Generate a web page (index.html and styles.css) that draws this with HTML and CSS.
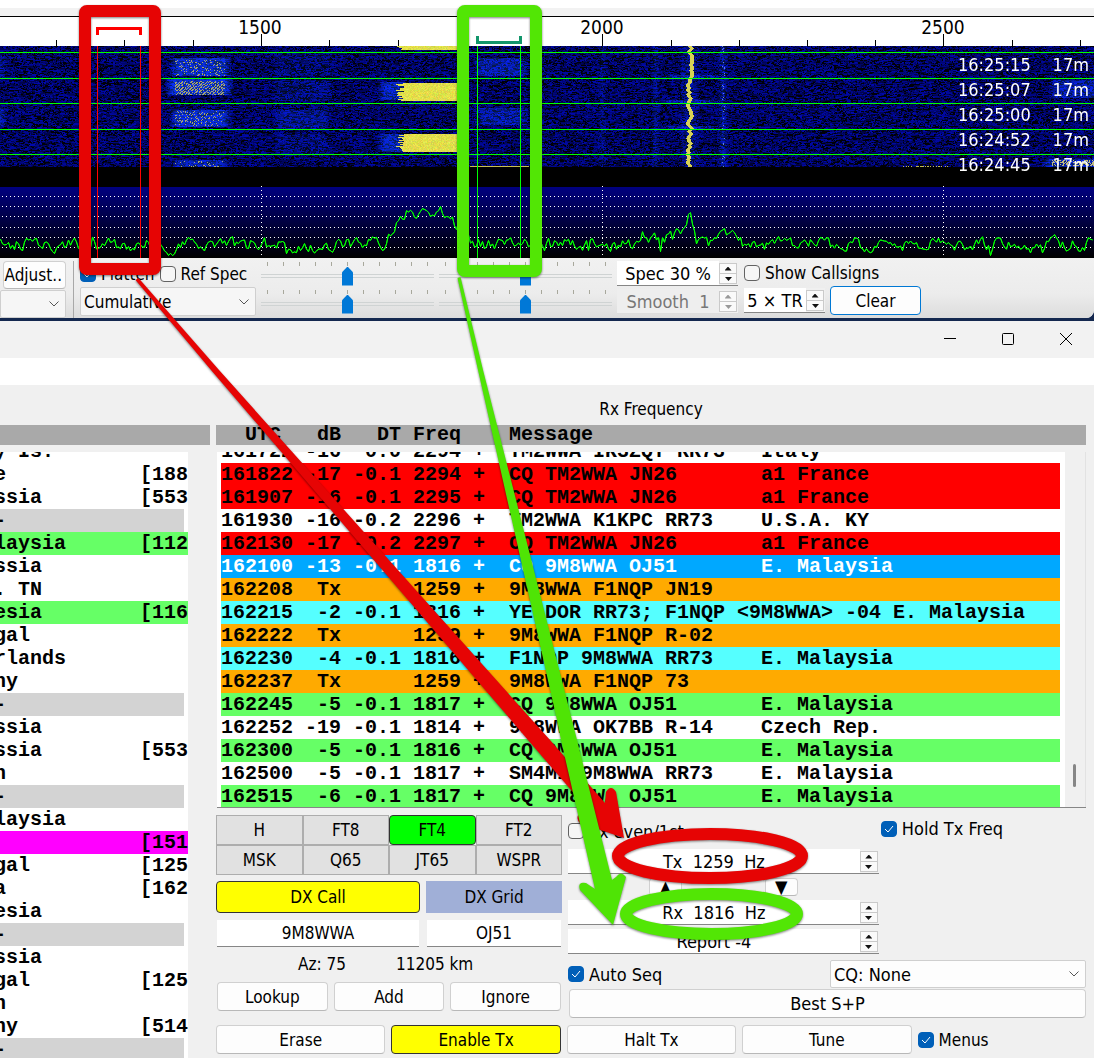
FILE: index.html
```html
<!DOCTYPE html>
<html lang="en">
<head>
<meta charset="utf-8">
<title>Wide Graph and Rx Frequency</title>
<link rel="stylesheet" href="styles.css">
</head>
<body>
<section class="graph-window">
  <div class="strip"></div>
  <div class="ruler">
    <svg class="ruler-marks" width="1094" height="29" aria-hidden="true">
      <path class="tick" d="M56.500 23v6M124.500 23v6M193.500 23v6M329.500 23v6M398.500 23v6M466.500 23v6M534.500 23v6M671.500 23v6M739.500 23v6M807.500 23v6M875.500 23v6M1012.500 23v6M1080.500 23v6M261.500 17v12M602.500 17v12M943.500 17v12"/>
      <path class="mark-tx" d="M97.500 18v-6.500h43v6.500"/>
      <path class="mark-rx" d="M477.500 19v6.500h43v-6.500"/>
      <text x="260" y="17">1500</text>
      <text x="602" y="17">2000</text>
      <text x="943" y="17">2500</text>
    </svg>
  </div>
  <div class="plot">
    <canvas id="waterfall" height="212"></canvas>
    <div class="stamps">
      <p><span>16:25:15</span><span>17m</span></p>
      <p><span>16:25:07</span><span>17m</span></p>
      <p><span>16:25:00</span><span>17m</span></p>
      <p><span>16:24:52</span><span>17m</span></p>
      <p><span>16:24:45</span><span>17m</span></p>
    </div>
  </div>
  <div class="controls">
    <div class="palette">
      <button class="btn adjust" type="button">Adjust..</button>
      <select class="combo" aria-label="Palette"><option></option></select>
    </div>
    <div class="spec-mode">
      <div class="checks">
        <label class="check"><input type="checkbox" checked>Flatten</label>
        <label class="check"><input type="checkbox">Ref Spec</label>
      </div>
      <select class="combo" aria-label="Spectrum type"><option>Cumulative</option></select>
    </div>
    <div class="sliders">
      <input type="range" value="50" aria-label="Waterfall gain">
      <input type="range" value="50" aria-label="Spectrum gain">
      <input type="range" value="50" aria-label="Waterfall zero">
      <input type="range" value="50" aria-label="Spectrum zero">
    </div>
    <div class="spins">
      <div class="spin"><input type="text" value="Spec 30 %" aria-label="Spectrum height"><span class="steps"><button type="button" aria-label="Up"></button><button type="button" aria-label="Down"></button></span></div>
      <div class="spin off"><input type="text" value="Smooth  1" aria-label="Smoothing" disabled><span class="steps"><button type="button" aria-label="Up" disabled></button><button type="button" aria-label="Down" disabled></button></span></div>
    </div>
    <div class="calls">
      <label class="check"><input type="checkbox">Show Callsigns</label>
      <div class="tr-row">
        <div class="spin tr"><input type="text" value="5 × TR" aria-label="Periods"><span class="steps"><button type="button" aria-label="Up"></button><button type="button" aria-label="Down"></button></span></div>
        <button class="btn clear" type="button">Clear</button>
      </div>
    </div>
  </div>
</section>

<section class="main-window">
  <header class="titlebar">
    <button type="button" aria-label="Minimize"><svg width="14" height="14"><path d="M1 6.500h12"/></svg></button>
    <button type="button" aria-label="Maximize"><svg width="14" height="14"><rect x="1.500" y="1.500" width="11" height="11" rx="1"/></svg></button>
    <button type="button" aria-label="Close"><svg width="14" height="14"><path d="M1 1l12 12M13 1L1 13"/></svg></button>
  </header>
  <div class="menubar"></div>
  <main class="panes">
    <section class="band">
      <h2 class="pane-title"></h2>
      <div class="cols-head"></div>
      <div class="log">
        <table>
          <tbody>
            <tr><td>y Is.</td><td></td></tr>
            <tr><td>e</td><td>[188</td></tr>
            <tr><td>ssia</td><td>[5532</td></tr>
            <tr class="sep"><td>-</td><td></td></tr>
            <tr class="cq"><td>laysia</td><td>[1126</td></tr>
            <tr><td>ssia</td><td></td></tr>
            <tr><td>. TN</td><td></td></tr>
            <tr class="cq"><td>esia</td><td>[1160</td></tr>
            <tr><td>gal</td><td></td></tr>
            <tr><td>rlands</td><td></td></tr>
            <tr><td>ny</td><td></td></tr>
            <tr class="sep"><td>-</td><td></td></tr>
            <tr><td>ssia</td><td></td></tr>
            <tr><td>ssia</td><td>[5532</td></tr>
            <tr><td>n</td><td></td></tr>
            <tr class="sep"><td>-</td><td></td></tr>
            <tr><td>laysia</td><td></td></tr>
            <tr class="new"><td></td><td>[1512</td></tr>
            <tr><td>gal</td><td>[1258</td></tr>
            <tr><td>a</td><td>[1622</td></tr>
            <tr><td>esia</td><td></td></tr>
            <tr class="sep"><td>-</td><td></td></tr>
            <tr><td>ssia</td><td></td></tr>
            <tr><td>gal</td><td>[1258</td></tr>
            <tr><td>n</td><td></td></tr>
            <tr><td>ny</td><td>[514</td></tr>
            <tr class="sep"><td>-</td><td></td></tr>
          </tbody>
        </table>
      </div>
    </section>

    <section class="rx">
      <h2 class="pane-title">Rx Frequency</h2>
      <div class="cols-head"><span class="utc">UTC</span><span class="db">dB</span><span class="dt">DT</span><span class="freq">Freq</span><span class="msg">Message</span></div>
      <div class="log">
        <table>
          <tbody>
            <tr><td class="utc">161722</td><td class="db">-16</td><td class="dt">0.0</td><td class="freq">2294</td><td class="plus">+</td><td class="msg">TM2WWA IK3ZQT RR73</td><td>Italy</td></tr>
            <tr class="dx"><td class="utc">161822</td><td class="db">-17</td><td class="dt">-0.1</td><td class="freq">2294</td><td class="plus">+</td><td class="msg">CQ TM2WWA JN26</td><td>a1 France</td></tr>
            <tr class="dx"><td class="utc">161907</td><td class="db">-16</td><td class="dt">-0.1</td><td class="freq">2295</td><td class="plus">+</td><td class="msg">CQ TM2WWA JN26</td><td>a1 France</td></tr>
            <tr><td class="utc">161930</td><td class="db">-16</td><td class="dt">-0.2</td><td class="freq">2296</td><td class="plus">+</td><td class="msg">TM2WWA K1KPC RR73</td><td>U.S.A. KY</td></tr>
            <tr class="dx"><td class="utc">162130</td><td class="db">-17</td><td class="dt">-0.2</td><td class="freq">2297</td><td class="plus">+</td><td class="msg">CQ TM2WWA JN26</td><td>a1 France</td></tr>
            <tr class="sel"><td class="utc">162100</td><td class="db">-13</td><td class="dt">-0.1</td><td class="freq">1816</td><td class="plus">+</td><td class="msg">CQ 9M8WWA OJ51</td><td>E. Malaysia</td></tr>
            <tr class="tx"><td class="utc">162208</td><td class="db">Tx</td><td class="dt"></td><td class="freq">1259</td><td class="plus">+</td><td class="msg">9M8WWA F1NQP JN19</td><td></td></tr>
            <tr class="me"><td class="utc">162215</td><td class="db">-2</td><td class="dt">-0.1</td><td class="freq">1816</td><td class="plus">+</td><td class="msg" colspan="2">YE1DOR RR73; F1NQP &lt;9M8WWA&gt; -04 E. Malaysia</td></tr>
            <tr class="tx"><td class="utc">162222</td><td class="db">Tx</td><td class="dt"></td><td class="freq">1259</td><td class="plus">+</td><td class="msg">9M8WWA F1NQP R-02</td><td></td></tr>
            <tr class="me"><td class="utc">162230</td><td class="db">-4</td><td class="dt">-0.1</td><td class="freq">1816</td><td class="plus">+</td><td class="msg">F1NQP 9M8WWA RR73</td><td>E. Malaysia</td></tr>
            <tr class="tx"><td class="utc">162237</td><td class="db">Tx</td><td class="dt"></td><td class="freq">1259</td><td class="plus">+</td><td class="msg">9M8WWA F1NQP 73</td><td></td></tr>
            <tr class="cq"><td class="utc">162245</td><td class="db">-5</td><td class="dt">-0.1</td><td class="freq">1817</td><td class="plus">+</td><td class="msg">CQ 9M8WWA OJ51</td><td>E. Malaysia</td></tr>
            <tr><td class="utc">162252</td><td class="db">-19</td><td class="dt">-0.1</td><td class="freq">1814</td><td class="plus">+</td><td class="msg">9M8WWA OK7BB R-14</td><td>Czech Rep.</td></tr>
            <tr class="cq"><td class="utc">162300</td><td class="db">-5</td><td class="dt">-0.1</td><td class="freq">1816</td><td class="plus">+</td><td class="msg">CQ 9M8WWA OJ51</td><td>E. Malaysia</td></tr>
            <tr><td class="utc">162500</td><td class="db">-5</td><td class="dt">-0.1</td><td class="freq">1817</td><td class="plus">+</td><td class="msg">SM4MI 9M8WWA RR73</td><td>E. Malaysia</td></tr>
            <tr class="cq"><td class="utc">162515</td><td class="db">-6</td><td class="dt">-0.1</td><td class="freq">1817</td><td class="plus">+</td><td class="msg">CQ 9M8WWA OJ51</td><td>E. Malaysia</td></tr>
          </tbody>
        </table>
        <div class="scroll"><span class="thumb"></span></div>
      </div>

      <div class="settings">
        <div class="station">
          <div class="modes">
            <button type="button">H</button><button type="button">FT8</button><button type="button" class="on">FT4</button><button type="button">FT2</button>
            <button type="button">MSK</button><button type="button">Q65</button><button type="button">JT65</button><button type="button">WSPR</button>
          </div>
          <div class="dx-grid">
            <button class="dx-call" type="button">DX Call</button>
            <button class="dx-loc" type="button">DX Grid</button>
            <input class="field" type="text" value="9M8WWA" aria-label="DX Call">
            <input class="field" type="text" value="OJ51" aria-label="DX Grid">
          </div>
          <p class="bearing"><span>Az: 75</span><span>11205 km</span></p>
          <div class="trio">
            <button class="btn" type="button">Lookup</button>
            <button class="btn" type="button">Add</button>
            <button class="btn" type="button">Ignore</button>
          </div>
        </div>
        <div class="tuning">
          <div class="hold-row">
            <label class="check"><input type="checkbox">Tx even/1st</label>
            <label class="check hold"><input type="checkbox" checked>Hold Tx Freq</label>
          </div>
          <div class="freqs">
            <div class="spin"><input type="text" value="Tx  1259  Hz" aria-label="Tx frequency"><span class="steps"><button type="button" aria-label="Up"></button><button type="button" aria-label="Down"></button></span></div>
            <div class="copy"><button class="btn" type="button" aria-label="Set Tx to Rx">▲</button><button class="btn" type="button" aria-label="Set Rx to Tx">▼</button></div>
            <div class="spin"><input type="text" value="Rx  1816  Hz" aria-label="Rx frequency"><span class="steps"><button type="button" aria-label="Up"></button><button type="button" aria-label="Down"></button></span></div>
            <div class="spin"><input type="text" value="Report -4" aria-label="Report"><span class="steps"><button type="button" aria-label="Up"></button><button type="button" aria-label="Down"></button></span></div>
          </div>
          <div class="seq-row">
            <label class="check"><input type="checkbox" checked>Auto Seq</label>
            <select class="combo" aria-label="CQ filter"><option>CQ: None</option></select>
          </div>
          <button class="btn best" type="button">Best S+P</button>
        </div>
      </div>
      <div class="actions">
        <button class="btn" type="button">Erase</button>
        <button class="btn enable" type="button">Enable Tx</button>
        <button class="btn" type="button">Halt Tx</button>
        <button class="btn" type="button">Tune</button>
        <label class="check"><input type="checkbox" checked>Menus</label>
      </div>
    </section>
  </main>
</section>

<svg class="notes" width="1094" height="1058" viewBox="0 0 1094 1058" aria-hidden="true">
  <g class="red">
    <rect x="85" y="11" width="70" height="258" rx="2"/>
    <ellipse cx="710" cy="856" rx="92" ry="22"/>
    <path class="head" d="M135.500 280L138.500 278L219 370L532 720L550 740L605 803L606 792Q611 784 616 792L624 838L580 823Q575 818 580 813L590 812L528 740L511 720L211 370Z"/>
  </g>
  <g class="green">
    <rect x="463" y="11" width="73" height="260" rx="2"/>
    <ellipse cx="711.500" cy="914" rx="85.500" ry="20"/>
    <path class="head" d="M457.500 278L460.500 277L483 370L572 720L577 740L612 880L616 877Q621 870 626 877L613 925L580 890Q577 881 586 883L595 889L561 740L557 720L478 370Z"/>
  </g>
</svg>
<script src="waterfall.js"></script>
</body>
</html>
```
FILE: styles.css
```css
* { box-sizing: border-box; }

body {
  margin: 0;
  height: 100vh;
  display: flex;
  flex-direction: column;
  overflow: hidden;
  position: relative;
  background: #14284f;
  color: #000;
  font-family: "DejaVu Sans Condensed", "DejaVu Sans", "Noto Sans", sans-serif;
  font-size: 17px;
}

button, input, select { font: inherit; color: inherit; margin: 0; }
h2, p { margin: 0; font-weight: normal; }

/* Wide graph */
.graph-window { background: #fff; padding-top: 8px; border-bottom-right-radius: 8px; overflow: hidden; flex: none; }
.strip { height: 9px; background: #f2f2f2; border-bottom: 1px solid #000; }
.ruler { height: 29px; overflow: hidden; }
.ruler-marks { display: block; font-size: 19px; text-anchor: middle; }
.tick { stroke: #000; }
.mark-tx, .mark-rx { fill: none; stroke-width: 3; }
.mark-tx { stroke: #f00; }
.mark-rx { stroke: #12966b; }

.plot { position: relative; background: #000; height: 212px; overflow: hidden; }
.plot canvas { display: block; width: 100%; height: 212px; }
.stamps { position: absolute; top: 6px; right: 5px; color: #fff; font-size: 18px; }
.stamps p { display: flex; justify-content: space-between; width: 131px; line-height: 25px; }

.controls {
  display: flex;
  height: 60px;
  padding-top: 3px;
  background: linear-gradient(#f1f1f1, #ececec 60%, #dcdcdc);
}

.btn {
  background: #fdfdfd;
  border: 1px solid #d0d0d0;
  border-bottom-color: #b8b8b8;
  border-radius: 4px;
  padding: 0;
  height: 29px;
  white-space: nowrap;
}

.combo {
  appearance: none;
  height: 28px;
  width: 100%;
  padding: 0 24px 0 3px;
  border: 1px solid #cfcfcf;
  border-radius: 2px;
  background: #fdfdfd url("data:image/svg+xml,%3Csvg xmlns='http://www.w3.org/2000/svg' width='10' height='6'%3E%3Cpath d='M.5.5L5 5L9.500.5' fill='none' stroke='%23555'/%3E%3C/svg%3E") no-repeat right 6px center;
}

.controls .combo { background-color: #f6f6f6; }

.check { display: inline-flex; align-items: center; gap: 5px; white-space: nowrap; }
.check input {
  appearance: none;
  flex: none;
  width: 16px;
  height: 16px;
  border: 1px solid #626262;
  border-radius: 4px;
  background: #f6f6f6;
}
.check input:checked {
  border-color: #005fb8;
  background: #005fb8 url("data:image/svg+xml,%3Csvg xmlns='http://www.w3.org/2000/svg' width='10' height='8'%3E%3Cpath d='M1 4L4 7L9 1' fill='none' stroke='%23fff'/%3E%3C/svg%3E") no-repeat center;
}

.palette { width: 74px; padding-right: 7px; border-right: 1px solid #a8a8a8; display: flex; flex-direction: column; gap: 1px; }
.adjust { margin-left: 3px; height: 28px; padding-right: 3px; text-align: right; overflow: hidden; }
.spec-mode { width: 182px; padding-left: 6px; display: flex; flex-direction: column; gap: 1px; }
.checks { display: flex; gap: 5px; height: 25px; }
.spec-mode .combo { height: 29px; }

.sliders { display: grid; grid-template-columns: 173px 173px; gap: 2px 5px; margin-left: 5px; align-content: start; }
.sliders input {
  appearance: none;
  width: 173px;
  height: 26px;
  padding: 4px 0 0;
  background:
    linear-gradient(#cfd3d3, #cfd3d3) 0 13px / 173px 1px no-repeat,
    linear-gradient(#cfd3d3, #cfd3d3) 0 16px / 173px 1px no-repeat,
    repeating-linear-gradient(90deg, #a8a89c 0 1px, transparent 1px 16px) 6px 1px / 161px 4px no-repeat;
}
.sliders input::-webkit-slider-thumb {
  appearance: none;
  width: 11px;
  height: 19px;
  background: #0078d7;
  clip-path: polygon(50% 0, 100% 30%, 100% 100%, 0 100%, 0 30%);
}

.spin {
  display: flex;
  height: 25px;
  background: #fff;
  border-bottom: 1px solid #868686;
  font-size: 18px;
}
.spin input {
  flex: 1;
  min-width: 0;
  padding: 0;
  border: 0;
  background: none;
  text-align: center;
}
.steps { display: flex; flex-direction: column; width: 19px; padding: 2px 1px 1px 0; background: #f0f0f0; }
.steps button {
  flex: 1;
  padding: 0;
  border: 1px solid #cacaca;
  background: #fafafa;
  display: flex;
  align-items: center;
  justify-content: center;
}
.steps button + button { border-top: 0; }
.steps button::before { content: ""; width: 7px; height: 4px; background: #111; clip-path: polygon(50% 0, 100% 100%, 0 100%); }
.steps button + button::before { transform: rotate(180deg); }

.spins { width: 121px; margin-left: 5px; display: flex; flex-direction: column; gap: 3px; }
.off { background: #eee; border-color: #ddd; color: #777; }
.off .steps button::before { background: #999; }
.calls { margin-left: 6px; }
.calls .check { height: 24px; }
.tr-row { display: flex; gap: 5px; margin-top: 1px; }
.tr { width: 81px; margin-top: 2px; }
.clear { width: 91px; border: 1px solid #0078d4; }

/* Main window */
.main-window { margin-top: 3px; flex: 1; min-height: 0; display: flex; flex-direction: column; background: #f0f0f0; }
.titlebar { flex: none; height: 37px; padding: 0 3px 2px 0; display: flex; justify-content: flex-end; gap: 8px; background: #f2f2f2; }
.titlebar button { width: 50px; border: 0; background: none; padding: 0; }
.titlebar svg { display: block; margin: 0 auto; fill: none; stroke: #000; }
.menubar { flex: none; height: 27px; background: #fff; }

.panes { flex: 1; min-height: 0; display: grid; grid-template-columns: 210px 1fr; grid-template-rows: 100%; gap: 6px; padding-right: 8px; }
.band, .rx { min-height: 0; min-width: 0; display: flex; flex-direction: column; }
.pane-title { flex: none; height: 40px; padding-top: 8px; line-height: 32px; font-size: 17px; text-align: center; }
.cols-head, .log { font-family: "Courier New", "Liberation Mono", monospace; font-size: 20px; font-weight: bold; line-height: 23px; }
.cols-head { flex: none; display: flex; height: 20px; line-height: 20px; padding-left: 5px; background: #a9a9a9; }

.log { margin-top: 7px; overflow: hidden; background: #fff; }
.log table { border-collapse: collapse; table-layout: fixed; margin-top: -12px; }
.log td { padding: 0; height: 23px; overflow: hidden; white-space: pre; }
.utc { width: 72px; }
.db { width: 48px; text-align: right; }
.dt, .freq { width: 60px; text-align: right; }
.plus { width: 48px; }
.log .plus { padding-left: 12px; }
.msg { width: 252px; }
.cols-head .utc { padding-left: 24px; }
.cols-head .msg { margin-left: 48px; }

.dx { background: #f00; }
.sel { background: #00a8ff; color: #fff; }
.tx { background: #ffaa00; }
.me { background: #55ffff; }
.cq { background: #66ff66; }
.new { background: #f0f; }

.band .log { flex: 1; min-height: 0; margin-right: 1px; border-right: 21px solid #f0f0f0; }
.band table { width: 194px; margin-left: -6px; }
.band td:first-child { width: 146px; }
.band .sep { background: linear-gradient(90deg, #d3d3d3 190px, #fff 190px); }

.rx .log { flex: none; height: 356px; margin-left: 1px; display: flex; border-bottom: 1px solid #868686; }
.rx .log table { flex: 1; min-width: 0; margin-left: 4px; height: 368px; }
.scroll { width: 21px; margin-left: 5px; background: #f0f0f0; border-right: 1px solid #e2e2e2; }
.thumb { display: block; width: 3px; height: 23px; margin: 312px 0 0 8px; border-radius: 2px; background: #868686; }

.settings { display: grid; grid-template-columns: 346fr 518fr; gap: 6px; margin-top: 7px; }
.station, .tuning { min-width: 0; }
.modes { display: grid; grid-template-columns: repeat(4, 1fr); }
.modes button { height: 30px; padding: 0; border: 1px solid #adadad; background: #e1e1e1; }
.modes .on { background: #0f0; border-color: #333; border-radius: 4px; }
.dx-grid { display: grid; grid-template-columns: 204fr 136fr; gap: 7px 6px; margin-top: 6px; }
.dx-call { height: 32px; border: 1px solid #333; border-radius: 4px; background: #ff0; padding: 0; }
.dx-loc { border: 0; background: #a0afd7; padding: 0; }
.field { min-width: 0; height: 27px; border: 0; border-bottom: 1px solid #868686; margin: 0 1px; padding: 0; text-align: center; background: #fff; }
.bearing { display: flex; height: 35px; line-height: 35px; padding-left: 82px; gap: 50px; }
.trio { display: grid; grid-template-columns: repeat(3, 1fr); gap: 6px; padding: 0 1px; }

.tuning { display: flex; flex-direction: column; font-size: 18px; }
.hold-row { display: flex; justify-content: space-between; height: 34px; padding-right: 83px; }
.hold-row .check { height: 32px; }
.hold-row .hold { height: 27px; }
.freqs { width: 60%; display: flex; flex-direction: column; gap: 4px; }
.copy { display: flex; justify-content: space-between; padding: 0 81px; }
.copy .btn { width: 33px; height: 18px; line-height: 16px; }
.seq-row { display: flex; justify-content: space-between; height: 28px; margin-top: 6px; }
.seq-row .combo { width: 256px; }
.best { margin: 1px 0 0 1px; }

.actions { display: grid; grid-template-columns: repeat(4, 169fr) 168fr; gap: 6px; margin-top: 7px; }
.enable { background: #ff0; border: 1px solid #333; }

/* Annotations drawn over both windows */
.notes { position: absolute; top: 0; left: 0; pointer-events: none; }
.notes g { fill: none; stroke-width: 12; filter: drop-shadow(0 1px 1px rgba(0, 0, 0, .5)); }
.red { stroke: #e60404; }
.green { stroke: #52e605; }
.notes .head { stroke: none; }
.red .head { fill: #e60404; }
.green .head { fill: #4fe405; }
```
FILE: waterfall.js
```js
const canvas = document.getElementById('waterfall');
const W = canvas.width = canvas.clientWidth;
const ctx = canvas.getContext('2d');
let seed = 7;
const rnd = () => (seed = (seed * 16807) % 2147483647) / 2147483647;
const FALL = 121;

// Noise floor, lifted inside each signal's rectangle with soft side edges.
const glows = [
  [168, 232, 12, 30, 110], [164, 234, 33, 49, 120], [168, 232, 64, 81, 110], [170, 230, 114, 121, 80],
  [270, 335, 6, 30, 18], [270, 335, 34, 55, 28], [272, 332, 64, 84, 45], [272, 332, 88, 110, 22],
  [-20, 9, 10, 32, 40], [-20, 8, 62, 80, 80], [472, 529, 12, 30, 70], [472, 529, 62, 79, 60],
  [376, 408, 36, 54, 90], [376, 408, 88, 106, 90], [650, 660, 0, 121, 70], [597, 607, 0, 121, 45],
  [717, 728, 0, 121, 90], [1048, 1110, 34, 52, 70], [1040, 1110, 113, 121, 90], [678, 700, 0, 121, 40],
  [660, 720, 29, 33, 60], [660, 720, 54, 58, 60], [660, 720, 80, 84, 60]
];
const img = ctx.createImageData(W, FALL);
const put = (x, y, r, g, b) => {
  const i = (y * W + x) * 4;
  img.data[i] = r; img.data[i + 1] = g; img.data[i + 2] = b; img.data[i + 3] = 255;
};
for (let y = 0; y < FALL; y++) {
  let prev = 90;
  for (let x = 0; x < W; x++) {
    prev = rnd() < 0.4 ? prev : rnd() < 0.24 ? 8 : 50 + rnd() * 125;
    let lift = 0;
    for (const [a, b, c, d, n] of glows)
      if (x >= a && x < b && y >= c && y < d) lift += n * Math.min(1, Math.min(x - a, b - x) / 9);
    const v = prev + lift;
    put(x, y, lift * 0.08, v * 0.05 + lift * 0.3, Math.min(240, v));
  }
}
// Speckled tones of the station near 1400 Hz.
for (const [y0, y1, p] of [[14, 30, 0.2], [35, 49, 0.6], [65, 80, 0.2], [115, 121, 0.15]])
  for (let y = y0; y < y1; y++) for (let x = 175; x < 225; x++)
    if (rnd() < p && (x + y) % 3) put(x, y, 165, 165, 110);
// Strong yellow transmissions.
for (const [y0, y1] of [[0, 4], [37, 55], [88, 106]])
  for (let y = y0; y < y1; y++) for (let x = 396 + Math.floor(rnd() * 9); x < 458; x++)
    put(x, y, 205 + rnd() * 40, 205 + rnd() * 35, 60 + rnd() * 30);
// Drifting carriers.
let drift = 689;
for (let y = 0; y < FALL; y++) {
  drift = Math.max(687, Math.min(691, drift + Math.round(rnd() * 3 - 1.5)));
  for (let x = drift - 1; x < drift + 3; x++) put(x, y, 215, 210, 85);
  if (rnd() < 0.3) put(722 + Math.floor(rnd() * 3), y, 100, 130, 220);
}
for (let x = 470; x < 529; x++) put(x, 120, 200, 190, 80);
for (let y = 114; y < 120; y++) for (let x = 1052; x < W; x++) if (rnd() < 0.45) put(x, y, 190, 185, 130);
for (let x = 903; x < 948; x++) if (rnd() < 0.5) put(x, 120, 190, 185, 80);
ctx.putImageData(img, 0, 0);

ctx.fillStyle = '#00ff00';
for (const y of [6, 32, 57, 83, 108]) ctx.fillRect(0, y, W, 1);

// Spectrum panel.
const grad = ctx.createLinearGradient(0, 141, 0, 212);
grad.addColorStop(0, '#000080');
grad.addColorStop(1, '#000000');
ctx.fillStyle = grad;
ctx.fillRect(0, 141, W, 71);
ctx.fillStyle = '#ffffff';
for (const y of [150, 160, 170, 181, 191, 201]) for (let x = 2; x < W; x += 4) ctx.fillRect(x, y, 1, 1);
for (const x of [261, 602, 943]) for (let y = 140; y < 210; y += 4) ctx.fillRect(x, y, 1, 1);

ctx.strokeStyle = '#00ff00';
ctx.lineWidth = 1;
ctx.beginPath();
let wob = 0;
for (let x = 0; x < W; x += 2) {
  wob = wob * 0.5 + (rnd() - 0.5) * 12;
  let base = 198;
  if (x > 382 && x < 408) base -= (x - 382) * 1.3;
  else if (x >= 408 && x < 448) base = 164;
  else if (x >= 448 && x < 470) base = 164 + (x - 448) * 1.5;
  if (x > 640 && x < 735) base -= 6;
  base -= 36 * Math.exp(-Math.abs(x - 689) / 4);
  if (Math.abs(x - 722) < 3) base -= 8;
  const y = Math.max(160, Math.min(209, base + wob + (rnd() < 0.04 ? 8 : 0))) + 0.5;
  x ? ctx.lineTo(x + 0.5, y) : ctx.moveTo(0.5, y);
}
ctx.stroke();
ctx.stroke();

for (const [x, c] of [[97, '#ff0000'], [140, '#ff0000'], [477, '#00ff00'], [520, '#00ff00']]) {
  ctx.fillStyle = c;
  ctx.fillRect(x, 0, 1, 212);
}
```
